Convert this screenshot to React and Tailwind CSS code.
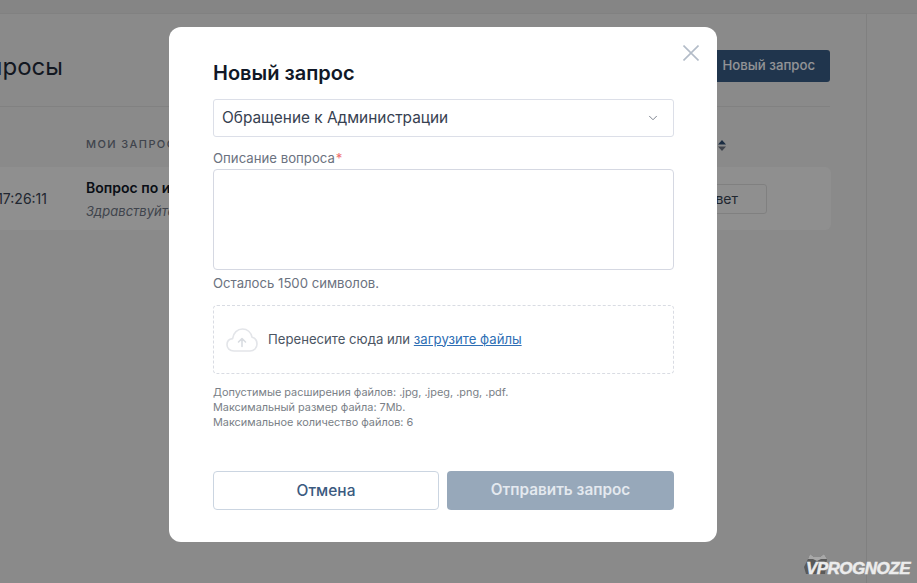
// Support requests page with the "new request" modal open
import React from "react";
import { ChevronDown } from "lucide-react";

const font = { fontFamily: "Inter, 'Liberation Sans', sans-serif" };

function SortIcon() {
  return (
    <svg width="8" height="11" viewBox="0 0 8 11" className="mb-[1px]">
      <path d="M4 0 L8 4.6 L0 4.6 Z" fill="#2c4a6e" />
      <path d="M4 11 L8 6.4 L0 6.4 Z" fill="#6b7280" />
    </svg>
  );
}

function BackgroundPage() {
  return (
    <div className="flex h-full w-full flex-col bg-[#e6e6e6]">
      <div className="h-[14px] shrink-0 border-b border-[#d8d8d8] bg-[#dedede]" />
      <div className="flex flex-1">
        <main className="w-[867px] shrink-0 border-r border-[#d6d6d6]">
          <div className="ml-[-140px] w-[971px]">
            {/* Title row */}
            <div className="flex h-[93px] w-[970px] items-center justify-between border-b border-[#d8d8d8] pl-[46px]">
              <h1 className="mt-[14px] text-[24px] leading-[32px] text-[#1f2937]">Мои запросы</h1>
              <button className="mt-[11px] h-[32px] rounded-[3px] bg-[#365980] px-[15px] text-[13.2px] font-medium text-[#f3f6fa]">
                Новый запрос
              </button>
            </div>
            {/* Table head */}
            <div className="flex h-[60px] items-end pb-[15px] pl-[226px] text-[11px] font-medium tracking-[1.4px] text-[#6b7280]">
              <span className="w-[632px]">МОИ ЗАПРОСЫ</span>
              <SortIcon />
            </div>
            {/* Table row */}
            <div className="flex h-[63px] items-center justify-between rounded-[6px] bg-[#efefef] pr-[64px]">
              <div className="flex items-center">
                <span className="w-[226px] pr-[39px] text-right text-[14px] text-[#374151]">17:26:11</span>
                <div className="flex flex-col gap-[6px]">
                  <span className="text-[14px] font-semibold leading-[18px] text-[#111827]">Вопрос по игре</span>
                  <span className="text-[13px] italic leading-[16px] text-[#6b7280]">Здравствуйте</span>
                </div>
              </div>
              <button className="flex h-[30px] w-[120px] items-center justify-end rounded-[3px] border border-[#d6d6d6] pr-[28px] text-[14px] text-[#374151]">
                Ответ
              </button>
            </div>
          </div>
        </main>
      </div>
    </div>
  );
}

function CloseIcon() {
  return (
    <svg width="16" height="16" viewBox="0 0 16 16" fill="none" stroke="#b3bcc8" strokeWidth="1.6">
      <path d="M0.5 0.5 L15.5 15.5 M15.5 0.5 L0.5 15.5" />
    </svg>
  );
}

function UploadCloud() {
  return (
    <svg width="32" height="24" viewBox="0 0 32 24" fill="none" stroke="#e3e5e9" strokeWidth="1.6" strokeLinecap="round" strokeLinejoin="round">
      <path d="M8 23 C3.5 23 1 20 1 16.7 C1 13.5 3.3 11 6.6 10.6 C7.3 5 11.5 1 16.5 1 C21.3 1 25 4.3 26 9.2 C29 10 31 12.8 31 16 C31 20 28 23 24 23 Z" />
      <path d="M16 18.5 V10.5 M12.5 14 L16 10.5 L19.5 14" stroke="#d9dce1" />
    </svg>
  );
}

function NewRequestModal() {
  return (
    <div className="relative h-[515px] w-[548px] rounded-[12px] bg-white pl-[44px] pr-[43px] pt-[33px]">
      <button className="absolute right-[18px] top-[18px]">
        <CloseIcon />
      </button>
      <h2 className="text-[20px] font-semibold leading-[26px] text-[#111827]">Новый запрос</h2>

      <div className="mt-[13px] flex h-[38px] items-center justify-between rounded-[3px] border border-[#dcdfe8] pl-[8px] pr-[13px] text-[15.4px] text-[#374151]">
        <span>Обращение к Администрации</span>
        <ChevronDown size={14} strokeWidth={1.5} className="text-[#6b7280]" />
      </div>

      <label className="mt-[12px] block text-[13.2px] leading-[18px] text-[#6b7280]">
        Описание вопроса<span className="ml-[1px] text-[#ee6b6b]">*</span>
      </label>
      <div className="mt-[2px] h-[101px] rounded-[4px] border border-[#d5d8e2]" />
      <p className="mt-[4px] text-[13.15px] leading-[18px] text-[#6b7280]">Осталось 1500 символов.</p>

      <div className="mt-[13px] flex h-[69px] items-center rounded-[4px] border border-dashed border-[#d9dce3] pl-[12px]">
        <UploadCloud />
        <span className="ml-[10px] text-[13.15px] text-[#4b5563]">
          Перенесите сюда или{" "}
          <a href="#" className="text-[#2f6fb5] underline">
            загрузите файлы
          </a>
        </span>
      </div>

      <div className="mt-[11px] text-[10.9px] leading-[15px] text-[#7a7f87]">
        <p>Допустимые расширения файлов: .jpg, .jpeg, .png, .pdf.</p>
        <p>Максимальный размер файла: 7Mb.</p>
        <p>Максимальное количество файлов: 6</p>
      </div>

      <div className="mt-[41px] flex gap-[8px]">
        <button className="h-[39px] w-[226px] rounded-[4px] border border-[#cbd5e1] text-[15.5px] font-medium text-[#3b5a80]">
          Отмена
        </button>
        <button className="h-[39px] w-[227px] rounded-[4px] bg-[#97a8ba] text-[15.3px] font-semibold text-[#e4e9ef]">
          Отправить запрос
        </button>
      </div>
    </div>
  );
}

function Watermark() {
  return (
    <div className="absolute bottom-[6px] right-[7px] flex items-center">
      <svg width="26" height="21" viewBox="0 0 26 21" className="absolute left-[-2px] top-[-6px]">
        <path d="M6 0 L10 3 L16 3 L20 0 L23 5 L21 20 L2 20 L0 13 L4 5 Z" fill="#5a5a5a" />
        <path d="M6 0 L10 3 L16 3 L20 0 L23 5 L17 5 L13 7 L9 5 L4 5 Z" fill="#a8a8a8" />
      </svg>
      <span
        className="relative text-[17px] font-bold italic leading-[17px] tracking-[-0.5px] text-[#ececec] [-webkit-text-stroke:0.5px_#ececec]"
        style={{ fontFamily: "'Liberation Sans', sans-serif" }}
      >
        VPROGNOZE
      </span>
    </div>
  );
}

export default function App() {
  return (
    <div className="relative h-[583px] w-full overflow-hidden" style={font}>
      <BackgroundPage />
      {/* Overlay */}
      <div className="absolute inset-0 bg-black/40">
        <div className="flex justify-center pr-[31px] pt-[27px]">
          <NewRequestModal />
        </div>
        <Watermark />
      </div>
    </div>
  );
}
